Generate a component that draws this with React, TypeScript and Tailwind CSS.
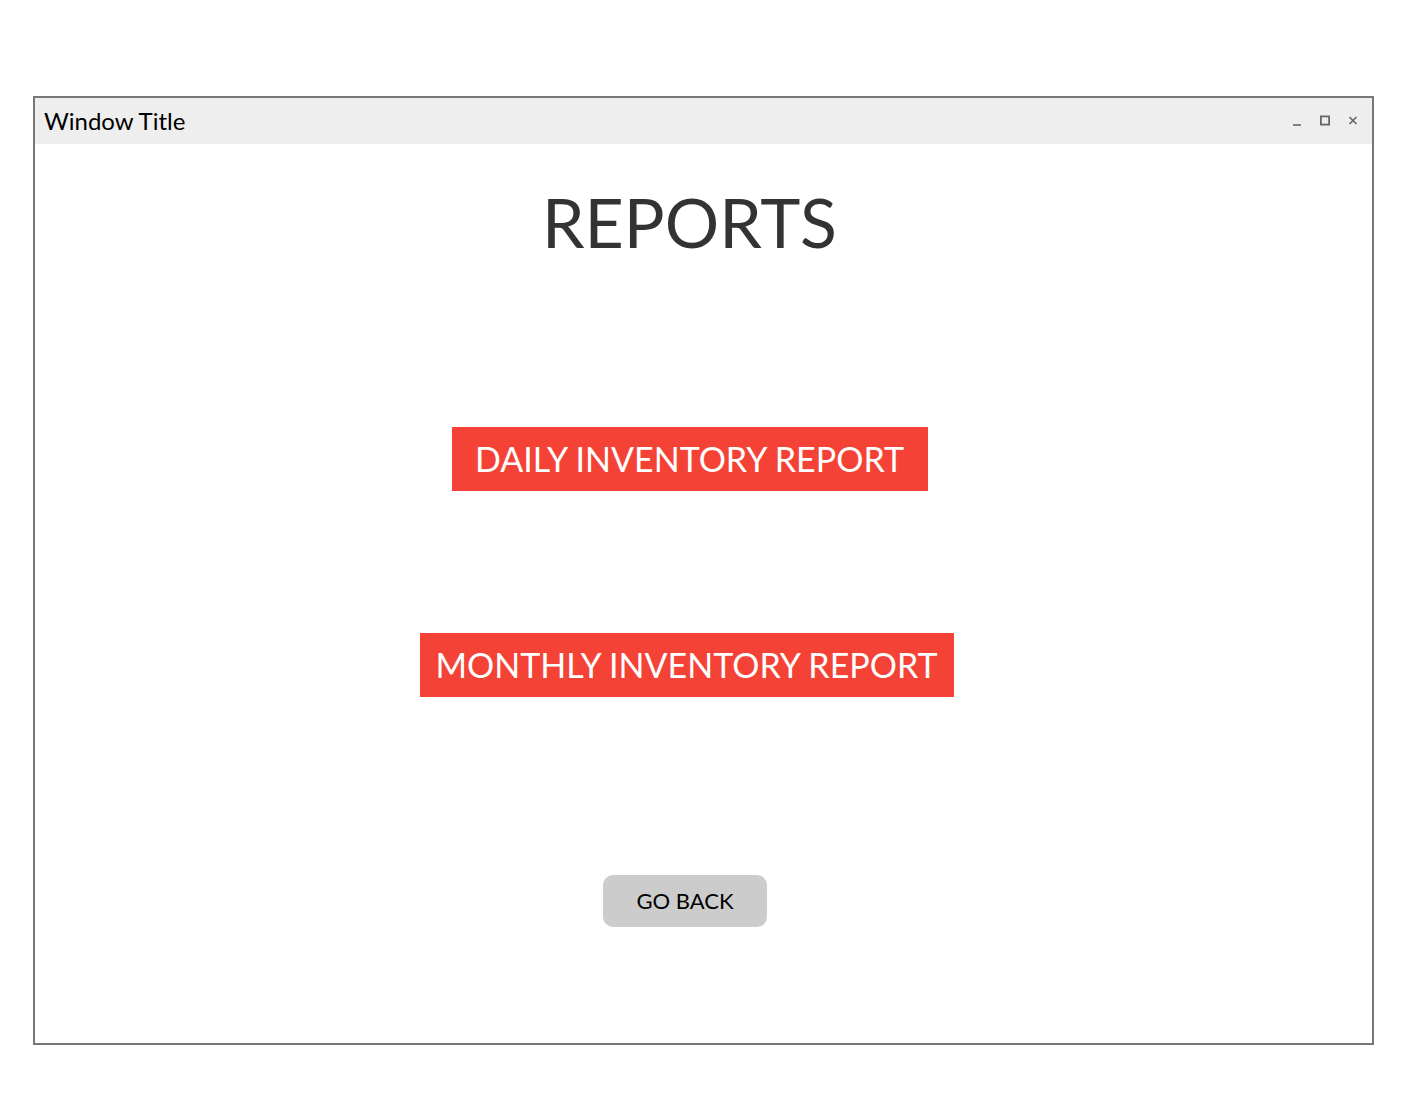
const font = { fontFamily: "'Source Sans Pro', Lato, 'Noto Sans', sans-serif" };

function ReportButton({ label, width, shift }: { label: string; width: string; shift: string }) {
  return (
    <button
      className={`${width} ${shift} h-[64px] bg-[#f44336] text-white text-[34px] leading-none flex items-center justify-center`}
    >
      {label}
    </button>
  );
}

function WindowControls() {
  return (
    <div className="flex items-center gap-[18px] text-[#666666]">
      <svg width="10" height="12" viewBox="0 0 10 12">
        <line x1="1" y1="10" x2="9" y2="10" stroke="currentColor" strokeWidth="1.6" />
      </svg>
      <svg width="10" height="12" viewBox="0 0 10 12">
        <rect x="0.9" y="1.4" width="8.2" height="8.2" fill="none" stroke="currentColor" strokeWidth="1.8" />
      </svg>
      <svg width="10" height="12" viewBox="0 0 10 12">
        <path d="M1.5 2 L8.5 9 M8.5 2 L1.5 9" stroke="currentColor" strokeWidth="1.6" />
      </svg>
    </div>
  );
}

export default function App() {
  return (
    <div className="w-[1401px] h-[1107px] bg-white pt-[96px] pl-[33px]" style={font}>
      <div className="w-[1341px] h-[949px] border-2 border-[#777777] flex flex-col">
        <div className="h-[46px] bg-[#eeeeee] flex items-center justify-between pl-[9px] pr-[14px]">
          <span className="text-[24px] text-black leading-none">Window Title</span>
          <WindowControls />
        </div>
        <div className="flex-1 flex flex-col items-center">
          <h1 className="mt-[38px] mr-[28px] h-[80px] text-[68px] leading-[80px] text-[#333333]">REPORTS</h1>
          <div className="mt-[165px] flex flex-col items-center gap-[142px]">
            <ReportButton label="DAILY INVENTORY REPORT" width="w-[476px]" shift="mr-[28px]" />
            <ReportButton label="MONTHLY INVENTORY REPORT" width="w-[534px]" shift="mr-[34px]" />
          </div>
          <button className="mt-[178px] mr-[37px] w-[164px] h-[52px] rounded-[10px] bg-[#cccccc] text-black text-[22px] leading-none">
            GO BACK
          </button>
        </div>
      </div>
    </div>
  );
}
